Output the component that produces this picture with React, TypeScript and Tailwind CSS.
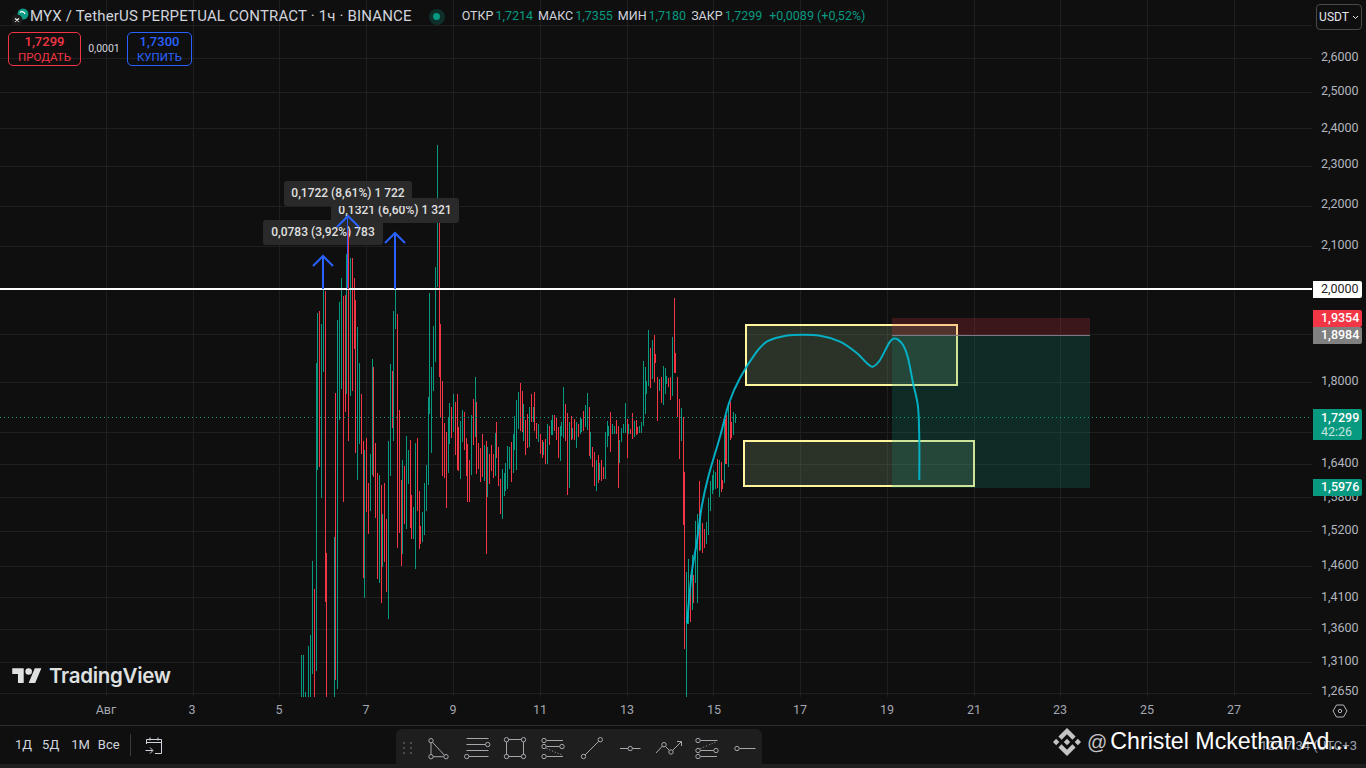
import { Fragment } from "react";

type Bar = [number, number, number, "g" | "r"];

const UP = "#089981";
const DOWN = "#f23645";

// bars are noted in 1/3 px around an origin, that is how they were read off the chart
const leftBars: Bar[] = [
  [34, 1065, 1190, "g"], [40, 1065, 1190, "g"], [46, 1176, 1190, "g"], [55, 1038, 1190, "g"],
  [61, 1005, 1190, "g"], [67, 783, 1122, "g"], [73, 867, 1190, "r"], [79, 190, 1113, "g"],
  [82, 39, 510, "g"], [88, 33, 501, "r"], [94, 72, 594, "g"], [100, -30, 216, "g"],
  [106, -27, 906, "r"], [109, 760, 1190, "r"], [133, 711, 1190, "g"], [136, 280, 1140, "r"],
  [142, 60, 1167, "g"], [148, 6, 360, "g"], [154, -66, 267, "g"], [160, -12, 606, "r"],
  [166, -15, 336, "r"], [169, -138, 282, "g"], [175, -240, 423, "r"], [181, -126, 288, "g"],
  [187, -126, 273, "r"], [193, -66, 147, "r"], [196, 0, 459, "r"], [202, 81, 540, "g"],
  [208, 189, 432, "g"], [214, 282, 462, "r"], [220, 423, 834, "r"], [223, 450, 894, "g"],
  [229, 414, 636, "r"], [235, 549, 702, "r"], [241, 462, 633, "g"], [247, 177, 525, "g"],
  [250, 201, 531, "r"], [256, 429, 654, "r"], [262, 519, 837, "r"], [268, 525, 849, "g"],
  [274, 555, 909, "r"], [277, 642, 801, "g"], [283, 549, 786, "r"], [289, 657, 876, "r"],
  [295, 423, 957, "g"], [301, 192, 528, "g"], [307, 213, 384, "r"], [310, 33, 423, "g"],
  [316, -30, 87, "g"], [322, 42, 744, "r"], [328, 330, 699, "r"], [334, 540, 798, "r"],
  [337, 480, 762, "g"], [343, 498, 672, "r"], [349, 408, 687, "g"], [355, 450, 552, "g"],
  [361, 420, 684, "r"], [364, 585, 717, "r"], [370, 621, 717, "g"], [376, 429, 807, "g"],
  [382, 414, 633, "r"], [388, 573, 747, "r"], [391, 678, 732, "r"], [397, 636, 726, "g"],
  [403, 549, 705, "g"], [409, 495, 633, "g"], [415, 291, 555, "g"], [418, -21, 342, "g"],
  [424, 201, 459, "g"], [430, 78, 273, "g"], [436, -99, 186, "g"], [442, -465, -39, "g"],
  [448, -237, 231, "r"], [451, 72, 351, "r"], [457, 243, 528, "r"], [463, 369, 534, "r"],
  [469, 396, 624, "r"], [475, 351, 519, "g"], [478, 309, 432, "g"], [484, 321, 414, "r"],
  [490, 282, 396, "g"], [496, 306, 465, "r"], [502, 282, 510, "r"], [505, 381, 513, "r"],
  [511, 363, 537, "g"], [517, 330, 426, "g"], [523, 336, 450, "r"], [529, 414, 528, "r"],
  [532, 432, 606, "r"], [538, 480, 606, "r"], [544, 345, 525, "g"], [550, 297, 435, "r"],
  [556, 231, 411, "g"], [559, 306, 522, "r"], [565, 429, 507, "r"], [571, 444, 546, "r"],
  [577, 402, 531, "r"], [583, 435, 543, "g"], [589, 423, 762, "r"], [592, 441, 591, "g"],
  [598, 462, 552, "r"], [604, 435, 513, "r"], [610, 462, 534, "r"], [616, 399, 528, "g"],
  [619, 366, 474, "r"], [625, 441, 558, "r"], [631, 537, 642, "r"], [637, 507, 657, "g"],
  [643, 519, 588, "g"], [646, 489, 573, "g"], [652, 438, 567, "g"], [658, 441, 507, "g"],
];

const rightBars: Bar[] = [
  [34, 457, 576, "r"], [40, 432, 549, "g"], [43, 378, 480, "g"], [49, 330, 540, "g"],
  [55, 306, 417, "g"], [61, 279, 423, "r"], [67, 303, 426, "r"], [70, 342, 453, "g"],
  [76, 390, 495, "r"], [82, 372, 474, "r"], [88, 351, 471, "g"], [94, 312, 396, "r"],
  [100, 351, 396, "g"], [103, 306, 423, "r"], [109, 399, 447, "r"], [115, 402, 456, "g"],
  [121, 432, 492, "r"], [127, 450, 504, "r"], [130, 456, 495, "g"], [136, 447, 522, "r"],
  [142, 402, 522, "g"], [148, 408, 465, "r"], [154, 390, 435, "g"], [157, 375, 435, "g"],
  [163, 375, 423, "r"], [169, 384, 450, "r"], [175, 411, 504, "r"], [181, 408, 513, "g"],
  [184, 396, 438, "g"], [190, 291, 444, "g"], [196, 342, 453, "r"], [202, 369, 615, "r"],
  [208, 396, 594, "g"], [214, 378, 450, "r"], [217, 414, 447, "g"], [223, 387, 450, "r"],
  [229, 396, 474, "g"], [235, 402, 441, "r"], [241, 384, 432, "g"], [244, 387, 426, "g"],
  [250, 363, 423, "r"], [256, 345, 411, "g"], [262, 309, 420, "g"], [268, 351, 498, "r"],
  [271, 426, 507, "g"], [277, 471, 531, "r"], [283, 486, 588, "r"], [289, 510, 603, "g"],
  [295, 495, 579, "r"], [298, 519, 570, "g"], [304, 510, 573, "r"], [310, 531, 567, "r"],
  [316, 426, 567, "g"], [322, 393, 471, "g"], [325, 408, 438, "g"], [331, 366, 486, "r"],
  [337, 402, 432, "g"], [343, 408, 432, "g"], [349, 390, 432, "r"], [355, 408, 594, "r"],
  [358, 450, 519, "g"], [364, 414, 456, "g"], [370, 402, 429, "g"], [376, 339, 429, "g"],
  [382, 387, 504, "r"], [385, 402, 432, "g"], [391, 417, 432, "r"], [397, 369, 447, "r"],
  [403, 393, 441, "g"], [409, 390, 435, "r"], [412, 411, 432, "r"], [418, 408, 429, "g"],
  [424, 396, 429, "g"], [430, 213, 408, "g"], [436, 231, 372, "g"], [439, 273, 312, "g"],
  [445, 120, 288, "g"], [451, 174, 294, "r"], [457, 150, 267, "g"], [463, 135, 276, "r"],
  [466, 192, 219, "r"], [472, 261, 393, "r"], [478, 267, 303, "g"], [484, 261, 339, "r"],
  [490, 228, 345, "g"], [496, 234, 312, "g"], [499, 258, 282, "g"], [505, 264, 291, "r"],
  [511, 261, 330, "r"], [517, 141, 318, "g"], [523, 24, 249, "r"], [526, 189, 249, "r"],
  [532, 261, 381, "r"], [538, 327, 507, "r"], [544, 354, 453, "g"], [550, 381, 705, "r"],
  [553, 546, 1077, "r"], [559, 846, 1220, "g"], [562, 970, 1002, "g"], [565, 807, 1002, "g"],
  [571, 855, 996, "r"], [577, 795, 960, "g"], [580, 855, 939, "r"], [586, 693, 879, "g"],
  [592, 672, 939, "g"], [598, 573, 783, "r"], [601, 660, 780, "g"], [607, 699, 789, "r"],
  [613, 717, 774, "r"], [619, 696, 762, "g"], [625, 624, 735, "g"], [631, 573, 663, "g"],
  [637, 555, 612, "g"], [640, 540, 600, "g"], [646, 546, 597, "g"], [652, 507, 594, "r"],
  [658, 510, 621, "g"], [664, 516, 606, "r"], [667, 570, 597, "r"], [673, 387, 579, "g"],
  [676, 387, 522, "r"], [679, 375, 522, "r"], [685, 342, 531, "g"], [691, 336, 450, "r"],
  [694, 396, 444, "r"], [700, 366, 435, "g"], [706, 372, 399, "g"],
];

const gridY = [25, 58, 92, 128, 166, 206, 246, 334, 382, 432, 464, 497, 531, 566, 597, 629, 662, 693];
const gridX = [106, 193, 279, 366, 453, 540, 627, 713, 800, 887, 974, 1060, 1147, 1234];

const priceLabels = [
  ["2,6000", 57], ["2,5000", 91], ["2,4000", 128], ["2,3000", 164], ["2,2000", 204],
  ["2,1000", 245], ["1,8000", 381], ["1,6400", 463], ["1,5800", 497], ["1,5200", 530],
  ["1,4600", 565], ["1,4100", 597], ["1,3600", 628], ["1,3100", 661], ["1,2650", 691],
] as const;

const timeLabels = [
  ["Авг", 106], ["3", 192], ["5", 279], ["7", 366], ["9", 453], ["11", 540], ["13", 627],
  ["15", 714], ["17", 800], ["19", 887], ["21", 974], ["23", 1060], ["25", 1147], ["27", 1234],
] as const;

const curve: [number, number][] = [
  [687, 623], [691.7, 573], [696.7, 543], [701.7, 506.7], [708.3, 476.7], [720, 436.7], [729, 403],
  [740, 378], [756.7, 351.7], [766.7, 341.7], [780, 337], [793, 335], [820, 335.7], [840, 341.7],
  [856.7, 353], [866.7, 363], [872.7, 366.7], [880, 360], [890, 341.7], [896, 338.7], [903, 345],
  [908, 358], [913, 383], [918, 406.7], [919.3, 440], [919.3, 480],
];

function smoothPath(pts: [number, number][]) {
  let d = `M${pts[0][0]} ${pts[0][1]}`;
  for (let i = 0; i < pts.length - 1; i++) {
    const p0 = pts[Math.max(i - 1, 0)];
    const p1 = pts[i];
    const p2 = pts[i + 1];
    const p3 = pts[Math.min(i + 2, pts.length - 1)];
    d += `C${p1[0] + (p2[0] - p0[0]) / 6} ${p1[1] + (p2[1] - p0[1]) / 6} ${p2[0] - (p3[0] - p1[0]) / 6} ${p2[1] - (p3[1] - p1[1]) / 6} ${p2[0]} ${p2[1]}`;
  }
  return d;
}

function Bars({ data, ox, oy }: { data: Bar[]; ox: number; oy: number }) {
  return (
    <>
      {data.map(([u, top, bottom, c], i) => {
        const x = Math.floor(ox + u / 3) + 0.5;
        return (
          <line
            key={i}
            x1={x}
            x2={x}
            y1={Math.round(oy + top / 3)}
            y2={Math.round(oy + bottom / 3)}
            stroke={c === "g" ? UP : DOWN}
            shapeRendering="crispEdges"
          />
        );
      })}
    </>
  );
}

function ChartCanvas() {
  return (
    <svg width={1312} height={697} className="absolute left-0 top-0 block">
      {gridY.map((y) => (
        <line key={y} x1={0} x2={1312} y1={y + 0.5} y2={y + 0.5} stroke="#1f1f1f" />
      ))}
      {gridX.map((x) => (
        <line key={x} x1={x + 0.5} x2={x + 0.5} y1={0} y2={697} stroke="#1f1f1f" />
      ))}

      <Bars data={leftBars} ox={290} oy={300} />
      <Bars data={rightBars} ox={500} oy={290} />

      <line x1={0} x2={1312} y1={417.5} y2={417.5} stroke={UP} strokeDasharray="1 3" />

      <rect x={746} y={325} width={211} height={60} fill="#9bc38c" fillOpacity={0.2} stroke="#fff59d" strokeWidth={2} />
      <rect x={744} y={441} width={230} height={45} fill="#9bc38c" fillOpacity={0.2} stroke="#fff59d" strokeWidth={2} />

      <rect x={892} y={318} width={198} height={17} fill="#f23645" fillOpacity={0.2} />
      <rect x={892} y={335} width={198} height={153} fill="#089981" fillOpacity={0.2} />
      <line x1={892} x2={1090} y1={335.5} y2={335.5} stroke="#787b86" />

      <path d={smoothPath(curve)} fill="none" stroke="#00bcd4" strokeWidth={2} strokeOpacity={0.9} />

      <line x1={0} x2={1312} y1={289} y2={289} stroke="#ffffff" strokeWidth={2} />

      <g fill="none" stroke="#2962ff" strokeWidth={2}>
        <path d="M323 289V256M313 266l10-10 10 10" />
        <path d="M395 289V233M385 243l10-10 10 10" />
      </g>
    </svg>
  );
}

function Tooltip({ className, children }: { className: string; children: string }) {
  return (
    <div
      className={`absolute flex h-[25px] items-center justify-center rounded-[3px] bg-[#2a2a2a] pb-[1px] text-[12px] font-medium text-[#e0e0e0] ${className}`}
    >
      {children}
    </div>
  );
}

function SymbolIcon() {
  return (
    <svg width={20} height={20} viewBox="0 0 20 20" className="shrink-0">
      <circle cx={13} cy={7} r={5.5} fill="#0f9b86" />
      <path d="M10 5.5c2-1.5 4.5-.8 5 1.5" fill="none" stroke="#fff" strokeWidth={1.3} />
      <circle cx={7} cy={13} r={5.5} fill="#1c1c1c" />
      <path d="M5 11.5l4 3M9 11.5l-4 3" stroke="#fff" strokeWidth={1.2} />
    </svg>
  );
}

function Legend() {
  const ohlc = [
    ["ОТКР", "1,7214"],
    ["МАКС", "1,7355"],
    ["МИН", "1,7180"],
    ["ЗАКР", "1,7299"],
  ];
  return (
    <div className="absolute left-[10px] top-[7px]">
      <div className="flex h-[19px] items-center">
        <SymbolIcon />
        <span className="whitespace-nowrap text-[15px] tracking-[0.16px] text-[#d1d4dc]">
          MYX / TetherUS PERPETUAL CONTRACT · 1ч · BINANCE
        </span>
        <span className="ml-[17px] flex h-[16px] w-[16px] items-center justify-center rounded-full bg-[#0e2f2a]">
          <span className="h-[7px] w-[7px] rounded-full bg-[#089981]" />
        </span>
        <div className="ml-[17px] flex items-center gap-[5px] whitespace-nowrap text-[12.5px] text-[#089981]">
          {ohlc.map(([k, v]) => (
            <span key={k}>
              <span className="mr-[2px] text-[#d1d4dc]">{k}</span>
              {v}
            </span>
          ))}
          <span className="ml-[2px]">+0,0089 (+0,52%)</span>
        </div>
      </div>
      <div className="-ml-[2px] mt-[6px] flex items-center">
        <div className="flex h-[34px] w-[73px] flex-col items-center justify-center rounded-[5px] border border-[#f23645] text-[#f23645]">
          <span className="text-[13px] font-medium leading-[16px]">1,7299</span>
          <span className="text-[11.5px] leading-[14px]">ПРОДАТЬ</span>
        </div>
        <span className="w-[46px] text-center text-[10.5px] text-[#d1d4dc]">0,0001</span>
        <div className="flex h-[34px] w-[65px] flex-col items-center justify-center rounded-[5px] border border-[#2962ff] text-[#2962ff]">
          <span className="text-[13px] font-medium leading-[16px]">1,7300</span>
          <span className="text-[11.5px] leading-[14px]">КУПИТЬ</span>
        </div>
      </div>
    </div>
  );
}

function TradingViewMark() {
  return (
    <div className="absolute left-[12px] top-[661px] flex items-center gap-[7px] text-[#dfe0e0]">
      <svg width={30} height={23} viewBox="0 0 36 28" fill="currentColor">
        <path d="M14 22H7V11H0V4h14v18zM28 22h-8l7.5-18h8L28 22z" />
        <circle cx={20} cy={8} r={4} />
      </svg>
      <span className="font-['Inter',sans-serif] text-[20.5px] font-semibold tracking-[-0.3px]">TradingView</span>
    </div>
  );
}

function PriceAxis() {
  return (
    <div className="relative w-[54px] shrink-0 text-[12.5px] text-[#b2b5be]">
      <div className="absolute left-[4px] top-[4px] flex h-[26px] w-[46px] items-center justify-center gap-[3px] rounded-[4px] border border-[#4a4a4a] text-[12px] text-[#e4e6ee]">
        USDT
        <svg width={7} height={5} viewBox="0 0 7 5" fill="none" stroke="currentColor">
          <path d="M1 1l2.5 2.5L6 1" />
        </svg>
      </div>
      {priceLabels.map(([label, y]) => (
        <span key={label} className="absolute left-[9px] -translate-y-1/2 leading-none" style={{ top: y }}>
          {label}
        </span>
      ))}
      <AxisTag className="top-[281px] h-[17px] bg-white text-[#222222]">2,0000</AxisTag>
      <AxisTag className="top-[310px] h-[17px] bg-[#f23645] font-medium text-white">1,9354</AxisTag>
      <AxisTag className="top-[327px] h-[17px] bg-[#808080] font-medium text-white">1,8984</AxisTag>
      <div className="absolute left-[1px] top-[409px] flex h-[31px] w-[49px] flex-col justify-center rounded-r-[2px] bg-[#089981] pl-[8px] text-white">
        <span className="font-medium leading-[15px]">1,7299</span>
        <span className="leading-[14px] text-[#c4e5df]">42:26</span>
      </div>
      <AxisTag className="top-[479px] h-[17px] bg-[#089981] font-medium text-white">1,5976</AxisTag>
    </div>
  );
}

function AxisTag({ className, children }: { className: string; children: string }) {
  return (
    <div className={`absolute left-[1px] flex w-[49px] items-center rounded-r-[2px] pl-[8px] ${className}`}>
      {children}
    </div>
  );
}

function TimeAxis() {
  return (
    <div className="relative h-[28px] shrink-0 text-[12.5px] text-[#a3a6af]">
      {timeLabels.map(([label, x]) => (
        <span key={label} className="absolute top-[13px] -translate-x-1/2 -translate-y-1/2 leading-none" style={{ left: x }}>
          {label}
        </span>
      ))}
      <svg width={16} height={14} viewBox="0 0 16 14" fill="none" stroke="#b2b5be" className="absolute left-[1332px] top-[7px]">
        <path d="M1 7l3.5-6h7L15 7l-3.5 6h-7z" />
        <circle cx={8} cy={7} r={1.7} />
      </svg>
    </div>
  );
}

const knob = "fill-none stroke-[#a6a8ad]";

function ToolIcon({ children }: { children: React.ReactNode }) {
  return (
    <span className="flex w-[38.4px] shrink-0 justify-center">
      <svg width={28} height={28} viewBox="0 0 28 28" fill="none" stroke="#a6a8ad">
        {children}
      </svg>
    </span>
  );
}

function Knobs({ pts }: { pts: [number, number][] }) {
  return (
    <>
      {pts.map(([x, y]) => (
        <circle key={`${x}-${y}`} cx={x} cy={y} r={2.2} className={knob} />
      ))}
    </>
  );
}

const tools = [
  <Fragment key="1">
    <path d="M7 9v11.5M9.3 22.7h10M8.7 8.5l11.6 12.6" />
    <Knobs pts={[[7, 6.7], [7, 22.7], [22, 22.7]]} />
  </Fragment>,
  <Fragment key="2">
    <path d="M3.5 4.5h22M3.5 10.5h19M3.5 16.5h22M6 22.5h19.5" />
    <Knobs pts={[[24.7, 10.5], [3.7, 22.5]]} />
  </Fragment>,
  <Fragment key="3">
    <path d="M7.5 5.5h12.6M7.5 22.5h12.6M5.5 8v12.5M22.5 8v12.5" />
    <Knobs pts={[[5.5, 5.7], [22.5, 5.7], [5.5, 22.5], [22.5, 22.5]]} />
  </Fragment>,
  <Fragment key="4">
    <path d="M7.5 6.5H24M7.5 12.5h13M7.5 22.5H24" />
    <path d="M7.5 14.5L23 21" strokeDasharray="1 2" />
    <Knobs pts={[[5, 6.5], [5, 12.5], [23, 12.5], [5, 22.5]]} />
  </Fragment>,
  <Fragment key="5">
    <path d="M7 21L20.7 7.3" />
    <Knobs pts={[[5.5, 22.5], [22.3, 5.7]]} />
  </Fragment>,
  <Fragment key="6">
    <path d="M4 14.5h8M16.5 14.5h8" />
    <Knobs pts={[[14.2, 14.5]]} />
  </Fragment>,
  <Fragment key="7">
    <path d="M1 19l6.5-7M10.5 12.5l4 4M17.5 16.5L26 8M22 7.5h4.5V12" />
    <Knobs pts={[[9, 10.7], [16, 18]]} />
  </Fragment>,
  <Fragment key="8">
    <path d="M7.5 6.5H24.5M7.5 16.5h13M7.5 22.5H24" />
    <path d="M7.5 14.5L23 8" strokeDasharray="1 2" />
    <Knobs pts={[[5, 6.5], [5, 16.5], [23, 16.5], [5, 22.5]]} />
  </Fragment>,
  <Fragment key="9">
    <path d="M8.5 14.5h16" />
    <Knobs pts={[[6, 14.5]]} />
  </Fragment>,
];

function DrawingToolbar() {
  return (
    <div className="absolute left-[396px] top-[3px] flex h-[38px] w-[366px] items-center rounded-[6px] bg-[#1e1e1e] pl-[23px]">
      <svg width={12} height={16} viewBox="0 0 12 16" fill="#4a4a4a" className="absolute left-[7px] top-[13px]">
        <rect x={0} y={0} width={2} height={2} />
        <rect x={7} y={0} width={2} height={2} />
        <rect x={0} y={5} width={2} height={2} />
        <rect x={7} y={5} width={2} height={2} />
        <rect x={0} y={10} width={2} height={2} />
        <rect x={7} y={10} width={2} height={2} />
      </svg>
      {tools.map((t, i) => (
        <ToolIcon key={i}>{t}</ToolIcon>
      ))}
    </div>
  );
}

function BottomBar() {
  return (
    <div className="relative flex h-[39px] shrink-0 items-center border-t border-[#2e2e2e] pl-[15px] text-[13px] text-[#d1d4dc]">
      <span>1Д</span>
      <span className="ml-[10px]">5Д</span>
      <span className="ml-[12px]">1М</span>
      <span className="ml-[8px]">Все</span>
      <span className="ml-[10px] h-[22px] w-px bg-[#3a3a3a]" />
      <svg width={20} height={20} viewBox="0 0 20 20" fill="none" stroke="#d1d4dc" className="ml-[13px]">
        <path d="M2.5 9V4.5h15v14H11M2.5 7.5h15M6 2.5v3M14 2.5v3M1.5 15.5h7M6 12.5l3 3-3 3" />
      </svg>

      <DrawingToolbar />

      <span className="absolute left-[1260px] top-[13px] whitespace-nowrap text-[13px] leading-none text-[#9aa0b0]">
        12:17:34 (UTC+3
      </span>
      <div className="absolute left-[1053px] top-[2px] flex items-center whitespace-nowrap font-['Liberation_Sans',sans-serif] leading-none">
        <svg width={28} height={28} viewBox="0 0 126.61 126.61" fill="#c4c4c4">
          <path d="M38.73 53.2l24.59-24.58 24.6 24.6 14.3-14.31L63.32 0 24.43 38.9zM0 63.31l14.3-14.31 14.31 14.31-14.31 14.3zM38.73 73.41l24.59 24.59 24.6-24.6 14.31 14.29-38.9 38.91-38.91-38.88-.01-.01zM98 63.31l14.3-14.31 14.31 14.3-14.31 14.32zM77.83 63.3L63.32 48.78 52.59 59.51l-1.24 1.23-2.54 2.54 14.51 14.5 14.51-14.47z" />
        </svg>
        <span className="ml-[6px] text-[20px] text-[#c4c4c4]">@</span>
        <span className="ml-[3px] text-[23.2px] text-white">Christel Mckethan Ad...</span>
      </div>
    </div>
  );
}

export default function App() {
  return (
    <div className="flex h-screen w-screen flex-col overflow-hidden bg-[#0f0f0f] font-['Roboto',sans-serif]">
      <div className="flex h-[697px] shrink-0">
        <div className="relative w-[1312px] shrink-0 overflow-hidden">
          <ChartCanvas />
          <Tooltip className="left-[331px] top-[198px] w-[128px]">0,1321 (6,60%) 1 321</Tooltip>
          <Tooltip className="left-[284px] top-[181px] w-[128px]">0,1722 (8,61%) 1 722</Tooltip>
          <Tooltip className="left-[263px] top-[220px] w-[120px]">0,0783 (3,92%) 783</Tooltip>
          <svg width={24} height={80} className="absolute left-[336px] top-[210px]" fill="none">
            <path d="M12.5 20V79" stroke="#f23645" />
            <path d="M11.5 79V6" stroke="#2962ff" />
            <path d="M1 17L12 6l11 11" stroke="#2962ff" strokeWidth={2} />
          </svg>
          <Legend />
          <TradingViewMark />
        </div>
        <PriceAxis />
      </div>
      <TimeAxis />
      <BottomBar />
      <div className="flex-1 bg-[#1f1f1f]" />
    </div>
  );
}
